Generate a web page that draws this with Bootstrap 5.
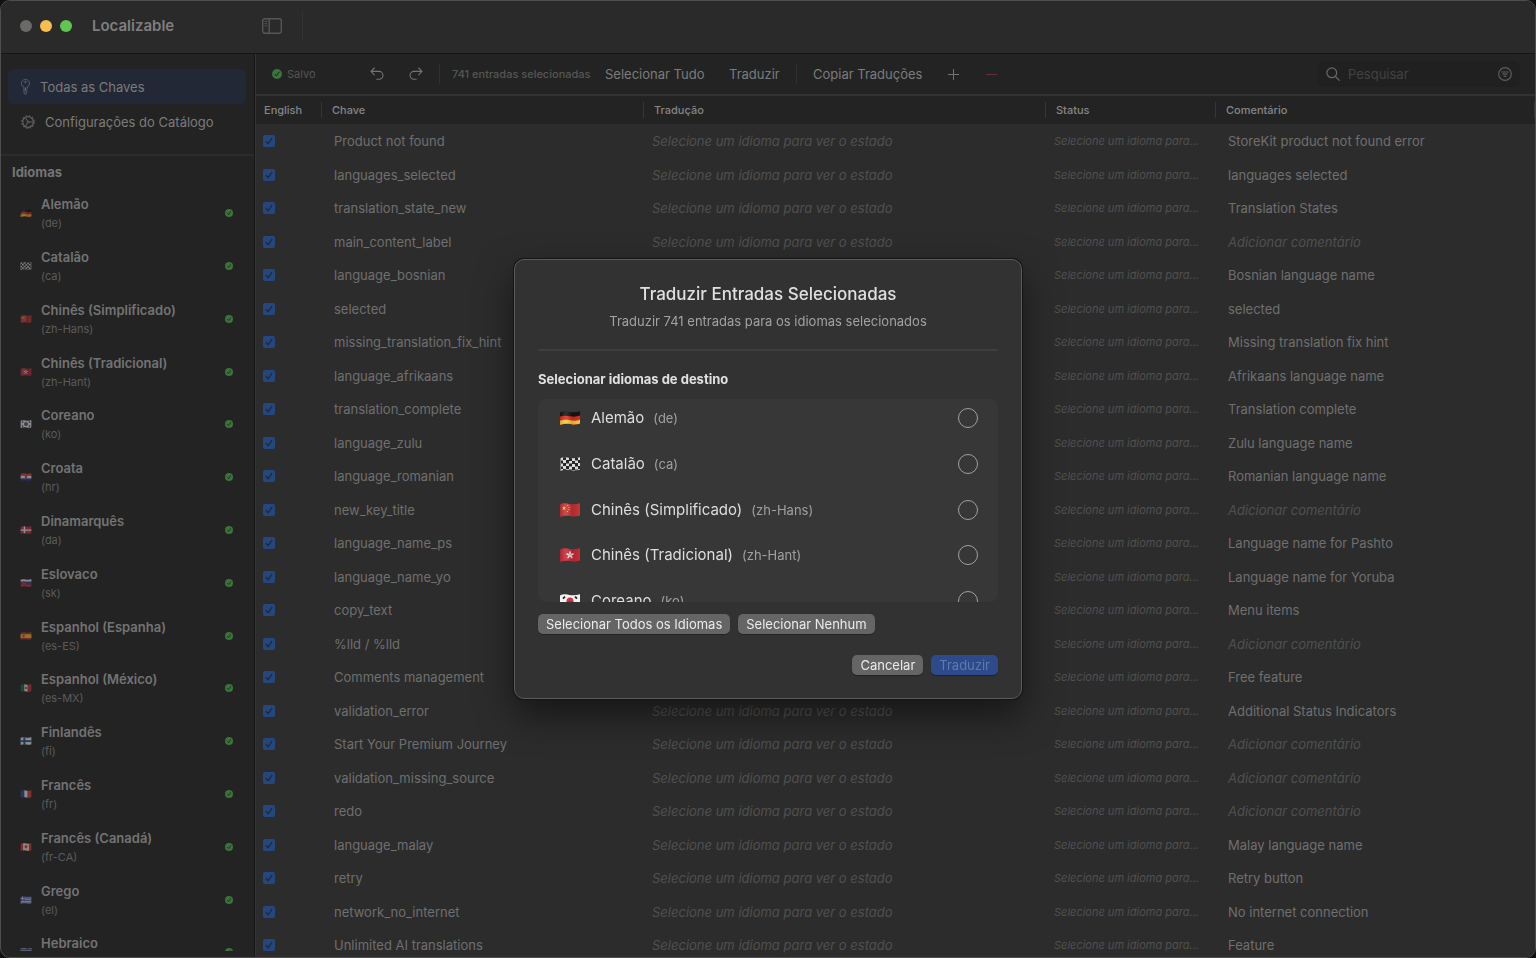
<!DOCTYPE html>
<html lang="pt-BR" data-bs-theme="dark">
<head>
<meta charset="utf-8">
<meta name="viewport" content="width=device-width, initial-scale=1">
<title>Localizable</title>
<link href="https://cdn.jsdelivr.net/npm/bootstrap@5.3.0/dist/css/bootstrap.min.css" rel="stylesheet">
<style>
  :root { --pane: #232323; --rows: #2c2c2c; --line: #343434; --dim: #7b7b7b; --faint: #565656; }
  html, body { height: 100%; }
  body { background: #111; color: var(--dim); font-family: Inter, "Liberation Sans", sans-serif; font-size: 13px; line-height: 18px; overflow: hidden; }
  svg { display: block; flex: none; }
  button, input { font: inherit; }
  .app-window { height: 100vh; background: var(--pane); border: 1px solid #4e4e4e; border-radius: 10px; overflow: hidden; }
  .titlebar { height: 53px; background: #2a2a2a; border-bottom: 1px solid #161616; padding: 0 0 2px 19px; }
  .light { width: 12px; height: 12px; border-radius: 50%; }
  .window-title { width: 170px; margin-left: 20px; font-size: 15px; font-weight: 600; color: #7f7f7f; }
  .vline { width: 1px; height: 20px; background: #303030; flex: none; }
  .vline-tall { height: 30px; background: #333; }
  .plain { background: none; border: 0; padding: 0; color: inherit; white-space: nowrap; text-align: left; }

  .sidebar { width: 254px; flex: none; border-right: 1px solid #161616; padding-bottom: 6px; }
  .side-top { padding: 15px 8px 15px 7px; border-bottom: 2px solid #2c2c2c; height: 102px; }
  .side-link { height: 35px; border-radius: 6px; padding-left: 13px; gap: 10px; color: var(--dim); text-decoration: none; }
  .side-link.current { background: #232837; }
  .side-heading { margin: 0; padding: 7px 11px 5px; font-size: 13px; line-height: 18px; font-weight: 700; color: #757575; }
  .lang-item { height: 53px; padding: 0 21px 0 19px; gap: 9px; color: inherit; text-decoration: none; }
  li:nth-child(5n) .lang-item { height: 52px; }
  .lang-name { font-weight: 600; color: #737373; line-height: 20px; }
  .lang-code { font-size: 11px; color: #5b5b5b; }
  .lang-item svg { opacity: .5; }
  .lang-item .tick, .tick { opacity: 1; color: #397438; }

  .main-pane { border-left: 1px solid #353535; min-width: 0; }
  .toolbar { height: 42px; border-bottom: 2px solid #333; padding: 0 15px 0 16px; color: #7c7c7c; }
  .tiny { font-size: 11px; color: var(--faint); }
  .w-saved { width: 82px; gap: 5px; } .w-undo { width: 39px; } .w-count { width: 153px; margin-left: 12px; }
  .w-all { width: 124px; } .w-tr { width: 67px; } .w-copy { width: 134px; } .w-add { width: 38px; }
  .search { width: 202px; height: 26px; border-radius: 6px; background: #202020; padding: 0 8px; color: #686868; }
  .search input { min-width: 0; background: none; border: 0; padding: 0; outline: 0; color: inherit; }
  .search input::placeholder { color: #424242; opacity: 1; }

  .keys { width: 100%; table-layout: fixed; border-collapse: collapse; }
  .keys th { height: 28px; background: var(--pane); padding: 0 10px; font-size: 11px; font-weight: 500; color: #868686;
    background-image: linear-gradient(#363636, #363636); background-size: 1px 16px; background-position: right center; background-repeat: no-repeat; }
  .keys th:first-child { padding: 0 8px; }
  .keys td { height: 34px; padding: 0 8px; white-space: nowrap; overflow: hidden; color: #6f6f6f; }
  .keys tr:nth-child(even) td { height: 33px; }
  .keys td:first-child { padding-left: 7px; }
  .keys td:nth-child(2), .keys td:nth-child(5) { padding-left: 12px; }
  .keys .hint { font-style: italic; color: #505050; }
  .keys .state { font-size: 11px; }
  .table-area { background: var(--rows); overflow: hidden; }
  .pick { appearance: none; display: block; width: 12px; height: 12px; margin: 0; border-radius: 2px; background: #24477f; }
  .pick:checked { background: #24477f url("data:image/svg+xml,%3Csvg xmlns='http://www.w3.org/2000/svg' viewBox='0 0 12 12'%3E%3Cpath d='M3.2 6.5 5.2 8.8 8.8 3.4' fill='none' stroke='%23222b3a' stroke-width='1.4' stroke-linecap='round' stroke-linejoin='round'/%3E%3C/svg%3E"); }

  .sheet { max-width: 508px; }
  .sheet .modal-content { background: #323232; border: 1px solid #5c5c5c; border-radius: 10px; padding: 23px; color: #dedede;
    box-shadow: 0 0 0 1px #141414, 0 16px 36px rgba(0, 0, 0, .5); }
  .sheet h1 { font-size: 17px; line-height: 22px; font-weight: 500; color: #e0e0e0; margin: 0 0 6px; }
  .sheet h2 { font-size: 13px; line-height: 18px; font-weight: 700; color: #e0e0e0; margin: 19px 0 11px; }
  .sheet .subtitle { color: #a2a2a2; margin: 0 0 18px; line-height: 20px; }
  .rule { height: 2px; background: #3e3e3e; }
  .targets { height: 203px; overflow: hidden; background: #373737; border-radius: 8px; }
  .target { height: 46px; padding: 0 20px 0 22px; }
  .target:first-child { height: 42px; padding-bottom: 4px; }
  .target:nth-child(3) { height: 45px; }
  .target-name { font-size: 15px; margin-left: 11px; }
  .target-code { color: #a0a0a0; margin-left: 9px; }
  .round { appearance: none; width: 20px; height: 20px; margin: 0; border: 1px solid #a0a0a0; border-radius: 50%; }
  .round:checked { background: #3478f6; }
  .push { height: 20px; padding: 0 8px; border: 0; border-radius: 5px; background: #656565; color: #ebebeb; line-height: 20px; white-space: nowrap; box-shadow: 0 1px 1px rgba(0, 0, 0, .3); }
  .push-primary { background: #2d4b8b; color: #6078ad; }
  .sheet-actions { margin-top: 21px; }
</style>
</head>
<body>

<svg width="0" height="0" class="position-absolute" aria-hidden="true">
  <defs>
    <clipPath id="wave"><path d="M0 1.400C4 0 6 .2 9.500 .9S16 1.400 20 .2V12.600C16 13.800 14 13.700 10.500 13S4 12.600 0 13.800Z"/></clipPath>
    <linearGradient id="fold"><stop offset="0" stop-color="#000" stop-opacity=".15"/><stop offset=".3" stop-color="#fff" stop-opacity=".12"/><stop offset=".6" stop-color="#000" stop-opacity=".15"/><stop offset="1" stop-color="#000" stop-opacity="0"/></linearGradient>
  </defs>
  <symbol id="f-de" viewBox="0 0 20 14"><g clip-path="url(#wave)"><path fill="#151515" d="M0 0h20v14H0z"/><path fill="#dd2d20" d="M0 5.600C4 4.400 6 4.400 10 5.200s6 .6 10-.6V14H0z"/><path fill="#f5c93a" d="M0 9.800C4 8.600 6 8.600 10 9.300s6 .6 10-.6V14H0z"/><path fill="url(#fold)" d="M0 0h20v14H0z"/></g></symbol>
  <symbol id="f-ca" viewBox="0 0 20 14"><g clip-path="url(#wave)"><path fill="#dcdcdc" d="M0 0h20v14H0z"/><path fill="#252525" d="M3 0h3v3H3zM9 1h3v3H9zM15 0h3v3.400h-3zM0 3.500h3v3H0zM6 3h3v3.500H6zM12 4h3v3h-3zM18 3h2v3h-2zM3 6h3v3H3zM9 6.500h3v3H9zM15 6h3v3.500h-3zM0 9.500h3v2.500H0zM6 9h3v3H6zM12 10h3v3h-3zM18 9h2v3h-2zM3 12h3v2H3zM9 12.500h3V14H9zM15 12.500h3V14h-3z"/></g><path stroke="#777" d="M.5 1v13"/></symbol>
  <symbol id="f-zh-Hans" viewBox="0 0 20 14"><g clip-path="url(#wave)"><path fill="#c83434" d="M0 0h20v14H0z"/><path fill="#ffd43b" d="m4 3 .6 1.500h1.600l-1.300 1 .5 1.600L4 6.200l-1.400.9.500-1.600-1.300-1h1.600zM7.400 2h1v1h-1zM8.600 4h1v1h-1zM8.400 6.200h1v1h-1zM7 8h1v1H7z"/><path fill="url(#fold)" d="M0 0h20v14H0z"/></g></symbol>
  <symbol id="f-zh-Hant" viewBox="0 0 20 14"><g clip-path="url(#wave)"><path fill="#c92a38" d="M0 0h20v14H0z"/><g fill="#f4e4e4"><ellipse cx="10" cy="4.800" rx=".9" ry="1.900"/><ellipse cx="10" cy="4.800" rx=".9" ry="1.900" transform="rotate(72 10 7)"/><ellipse cx="10" cy="4.800" rx=".9" ry="1.900" transform="rotate(144 10 7)"/><ellipse cx="10" cy="4.800" rx=".9" ry="1.900" transform="rotate(216 10 7)"/><ellipse cx="10" cy="4.800" rx=".9" ry="1.900" transform="rotate(288 10 7)"/></g><path fill="url(#fold)" d="M0 0h20v14H0z"/></g></symbol>
  <symbol id="f-ko" viewBox="0 0 20 14"><g clip-path="url(#wave)"><path fill="#f2f2f2" d="M0 0h20v14H0z"/><path fill="#cf3346" d="M6.500 7a3.500 3.500 0 0 1 7 0z"/><path fill="#2b5fae" d="M6.500 7a3.500 3.500 0 0 0 7 0z"/><path stroke="#222" stroke-width="1.800" d="m3 4.600 2-2M15 2.600l2 2M3 9.600l2 2M15 11.600l2-2"/></g></symbol>
  <symbol id="f-hr" viewBox="0 0 20 14"><g clip-path="url(#wave)"><path fill="#e23b35" d="M0 0h20v5H0z"/><path fill="#f4f4f4" d="M0 5h20v5H0z"/><path fill="#2836a8" d="M0 9.500h20V14H0z"/><path fill="#d2373b" d="M8 4h4v5H8z"/></g></symbol>
  <symbol id="f-da" viewBox="0 0 20 14"><g clip-path="url(#wave)"><path fill="#d02c43" d="M0 0h20v14H0z"/><path fill="#fff" d="M6 0h2.500v14H6zM0 6h20v2.400H0z"/></g></symbol>
  <symbol id="f-sk" viewBox="0 0 20 14"><g clip-path="url(#wave)"><path fill="#f4f4f4" d="M0 0h20v5H0z"/><path fill="#2847ae" d="M0 5h20v5H0z"/><path fill="#d8303b" d="M0 9.500h20V14H0zM4 4h5v5.500H4z"/></g></symbol>
  <symbol id="f-es-ES" viewBox="0 0 20 14"><g clip-path="url(#wave)"><path fill="#c82e26" d="M0 0h20v14H0z"/><path fill="#f5c22e" d="M0 4h20v6.500H0z"/><path fill="#a0572b" d="M4 5h3.500v4H4z"/></g></symbol>
  <symbol id="f-es-MX" viewBox="0 0 20 14"><g clip-path="url(#wave)"><path fill="#176b4b" d="M0 0h7v14H0z"/><path fill="#f2f2f2" d="M7 0h6v14H7z"/><path fill="#cb2d3d" d="M13 0h7v14h-7z"/><circle cx="10" cy="7" r="2" fill="#866a42"/></g></symbol>
  <symbol id="f-fi" viewBox="0 0 20 14"><g clip-path="url(#wave)"><path fill="#f2f2f2" d="M0 0h20v14H0z"/><path fill="#254f98" d="M5.500 0h3.500v14H5.500zM0 5.500h20v3.300H0z"/></g></symbol>
  <symbol id="f-fr" viewBox="0 0 20 14"><g clip-path="url(#wave)"><path fill="#284bae" d="M0 0h7v14H0z"/><path fill="#f4f4f4" d="M7 0h6v14H7z"/><path fill="#df3a3d" d="M13 0h7v14h-7z"/></g></symbol>
  <symbol id="f-fr-CA" viewBox="0 0 20 14"><g clip-path="url(#wave)"><path fill="#df3832" d="M0 0h20v14H0z"/><path fill="#f5f5f5" d="M5 0h10v14H5z"/><path fill="#df3832" d="m10 3 1 1.500 2 .5-1 3-1.500 1v2h-1V9L8 8 7 5l2-.5z"/></g></symbol>
  <symbol id="f-el" viewBox="0 0 20 14"><g clip-path="url(#wave)"><path fill="#4a58b4" d="M0 0h20v14H0z"/><path stroke="#e8e8f4" stroke-width="1.400" d="M8 3.500h12M8 6.500h12M0 9.500h20M0 12h20M4 0v8M0 4.500h8"/></g></symbol>
  <symbol id="f-he" viewBox="0 0 20 14"><g clip-path="url(#wave)"><path fill="#f2f2f2" d="M0 0h20v14H0z"/><path fill="#2847ae" d="M0 1.500h20v3H0zM0 10.500h20v2H0z"/></g></symbol>
  <symbol id="ok" viewBox="0 0 10 10"><circle cx="5" cy="5" r="5" fill="currentColor"/><path d="M3 5.300 4.500 7 7 3.200" fill="none" stroke="#222" stroke-width="1" stroke-linecap="round" stroke-linejoin="round"/></symbol>
</svg>

<div class="app-window d-flex flex-column">
  <header class="titlebar d-flex align-items-center flex-shrink-0">
    <div class="d-flex gap-2"><span class="light" style="background:#6a6a68"></span><span class="light" style="background:#f5bf4f"></span><span class="light" style="background:#61c554"></span></div>
    <div class="window-title">Localizable</div>
    <button class="plain me-3" type="button" aria-label="Barra lateral">
      <svg width="20" height="16" viewBox="0 0 20 16" fill="none" stroke="#565656" stroke-width="1.400"><rect x=".7" y=".7" width="18.600" height="14.600" rx="2.200"/><path d="M7.200 1v14"/><path stroke-width="1" d="M2.600 3.500h2.600M2.600 5.700h2.600M2.600 7.900h2.600"/></svg>
    </button>
    <span class="vline vline-tall ms-1"></span>
  </header>

  <div class="d-flex flex-grow-1 overflow-hidden">
    <nav class="sidebar d-flex flex-column" aria-label="Idiomas">
      <div class="side-top flex-shrink-0">
        <a href="#" class="side-link current d-flex align-items-center">
          <svg width="9" height="16" viewBox="0 0 9 16" fill="none" stroke="#566078" stroke-linejoin="round"><path d="M3 8.200a4 4 0 1 1 3 0v1.300L5.200 10.500l1 1-1 1.200.6 1L4.500 15.500 3 14z"/><circle cx="4.500" cy="3" r=".8"/><path d="M4.500 8.500v4"/></svg>
          <span>Todas as Chaves</span></a>
        <a href="#" class="side-link d-flex align-items-center">
          <svg width="14" height="14" viewBox="0 0 14 14" fill="none" stroke="#606060"><circle cx="7" cy="7" r="5.300" stroke-width="1.200"/><circle cx="7" cy="7" r="6.300" stroke-width="1.200" stroke-dasharray="1.600 1.700"/><path d="M8 7h4.300M6.500 6.200 4.400 2.500M6.500 7.800l-2.100 3.700"/><circle cx="7" cy="7" r="1"/></svg>
          <span>Configurações do Catálogo</span></a>
      </div>
      <h2 class="side-heading">Idiomas</h2>
      <ul id="languages" class="list-unstyled m-0 flex-grow-1 overflow-hidden"></ul>
    </nav>

    <main class="main-pane d-flex flex-column flex-grow-1">
      <div class="toolbar d-flex align-items-center flex-shrink-0">
        <div class="w-saved tiny d-flex align-items-center"><svg class="tick" width="10" height="10"><use href="#ok"/></svg>Salvo</div>
        <button class="plain w-undo ms-3" type="button" aria-label="Desfazer"><svg width="14" height="14" viewBox="0 0 14 14" fill="none" stroke="#747474" stroke-width="1.100" stroke-linecap="round" stroke-linejoin="round"><path d="M4.300 1 1 4.400l3.300 3.400M1.200 4.400H9a3.900 3.900 0 0 1 0 7.900H6.800"/></svg></button>
        <button class="plain" type="button" aria-label="Refazer"><svg width="14" height="14" viewBox="0 0 14 14" fill="none" stroke="#747474" stroke-width="1.100" stroke-linecap="round" stroke-linejoin="round"><path d="M9.700 1 13 4.400 9.700 7.800M12.800 4.400H5a3.900 3.900 0 0 0 0 7.900h2.200"/></svg></button>
        <span class="vline ms-3"></span>
        <span class="w-count tiny fw-medium text-nowrap">741 entradas selecionadas</span>
        <button class="plain w-all" type="button">Selecionar Tudo</button>
        <button class="plain w-tr" type="button">Traduzir</button>
        <span class="vline me-3"></span>
        <button class="plain w-copy" type="button">Copiar Traduções</button>
        <button class="plain w-add" type="button" aria-label="Adicionar"><svg width="13" height="13" viewBox="0 0 13 13" stroke="#747474"><path d="M6.500 1v11M1 6.500h11"/></svg></button>
        <button class="plain" type="button" aria-label="Remover"><svg width="13" height="13" viewBox="0 0 13 13" stroke="#643230"><path d="M1 6.500h11"/></svg></button>
        <div class="search d-flex align-items-center gap-2 ms-auto">
          <svg width="14" height="14" viewBox="0 0 14 14" fill="none" stroke="#686868" stroke-width="1.200" stroke-linecap="round"><circle cx="5.800" cy="5.800" r="4.900"/><path d="m9.500 9.500 3.800 3.800"/></svg>
          <input class="flex-grow-1" type="search" placeholder="Pesquisar" aria-label="Pesquisar">
          <button class="plain" type="button" aria-label="Filtrar"><svg width="14" height="14" viewBox="0 0 14 14" fill="none" stroke="#5c5c5c" stroke-width="1.200"><circle cx="7" cy="7" r="6.300"/><path d="M3.200 5h7.600M4.400 7.200h5.200M5.600 9.400h2.800"/></svg></button>
        </div>
      </div>
      <div class="table-area flex-grow-1">
        <table class="keys">
          <colgroup><col style="width:66px"><col style="width:322px"><col style="width:402px"><col style="width:170px"><col></colgroup>
          <thead><tr><th>English</th><th>Chave</th><th>Tradução</th><th>Status</th><th>Comentário</th></tr></thead>
          <tbody id="entries"></tbody>
        </table>
      </div>
    </main>
  </div>
</div>

<div class="modal show d-block" tabindex="-1" role="dialog" aria-labelledby="sheet-title">
  <div class="modal-dialog modal-dialog-centered sheet">
    <div class="modal-content">
      <h1 id="sheet-title" class="text-center">Traduzir Entradas Selecionadas</h1>
      <p class="subtitle text-center">Traduzir 741 entradas para os idiomas selecionados</p>
      <div class="rule"></div>
      <h2>Selecionar idiomas de destino</h2>
      <div id="targets" class="targets"></div>
      <div class="d-flex gap-2 pt-2 mt-1">
        <button class="push" type="button">Selecionar Todos os Idiomas</button>
        <button class="push" type="button">Selecionar Nenhum</button>
      </div>
      <div class="sheet-actions d-flex gap-2 justify-content-end">
        <button class="push" type="button">Cancelar</button>
        <button class="push push-primary" type="button" disabled>Traduzir</button>
      </div>
    </div>
  </div>
</div>

<script src="https://cdn.jsdelivr.net/npm/bootstrap@5.3.0/dist/js/bootstrap.bundle.min.js"></script>
<script>
  const languages = [
    ['Alemão', 'de'], ['Catalão', 'ca'], ['Chinês (Simplificado)', 'zh-Hans'], ['Chinês (Tradicional)', 'zh-Hant'],
    ['Coreano', 'ko'], ['Croata', 'hr'], ['Dinamarquês', 'da'], ['Eslovaco', 'sk'], ['Espanhol (Espanha)', 'es-ES'],
    ['Espanhol (México)', 'es-MX'], ['Finlandês', 'fi'], ['Francês', 'fr'], ['Francês (Canadá)', 'fr-CA'], ['Grego', 'el'], ['Hebraico', 'he']
  ];
  const entries = [
    ['Product not found', 'StoreKit product not found error'], ['languages_selected', 'languages selected'],
    ['translation_state_new', 'Translation States'], ['main_content_label', ''], ['language_bosnian', 'Bosnian language name'],
    ['selected', 'selected'], ['missing_translation_fix_hint', 'Missing translation fix hint'],
    ['language_afrikaans', 'Afrikaans language name'], ['translation_complete', 'Translation complete'],
    ['language_zulu', 'Zulu language name'], ['language_romanian', 'Romanian language name'], ['new_key_title', ''],
    ['language_name_ps', 'Language name for Pashto'], ['language_name_yo', 'Language name for Yoruba'], ['copy_text', 'Menu items'],
    ['%lld / %lld', ''], ['Comments management', 'Free feature'], ['validation_error', 'Additional Status Indicators'],
    ['Start Your Premium Journey', ''], ['validation_missing_source', ''], ['redo', ''], ['language_malay', 'Malay language name'],
    ['retry', 'Retry button'], ['network_no_internet', 'No internet connection'], ['Unlimited AI translations', 'Feature']
  ];
  document.getElementById('languages').innerHTML = languages.map(([name, code]) => `
    <li><a href="#" class="lang-item d-flex align-items-center">
      <svg width="12" height="8"><use href="#f-${code}"/></svg>
      <span class="d-flex flex-column flex-grow-1"><span class="lang-name">${name}</span><span class="lang-code">(${code})</span></span>
      <svg class="tick" width="8" height="8"><use href="#ok"/></svg>
    </a></li>`).join('');
  document.getElementById('entries').innerHTML = entries.map(([key, note]) => `
    <tr><td><input class="pick" type="checkbox" checked aria-label="${key}"></td><td>${key}</td>
      <td class="hint">Selecione um idioma para ver o estado</td><td class="hint state">Selecione um idioma para...</td>
      ${note ? `<td>${note}</td>` : '<td class="hint">Adicionar comentário</td>'}</tr>`).join('');
  document.getElementById('targets').innerHTML = languages.slice(0, 5).map(([name, code]) => `
    <label class="target d-flex align-items-center">
      <svg width="20" height="14"><use href="#f-${code}"/></svg>
      <span class="target-name">${name}</span><span class="target-code">(${code})</span>
      <input class="round ms-auto" type="checkbox">
    </label>`).join('');
</script>
</body>
</html>
